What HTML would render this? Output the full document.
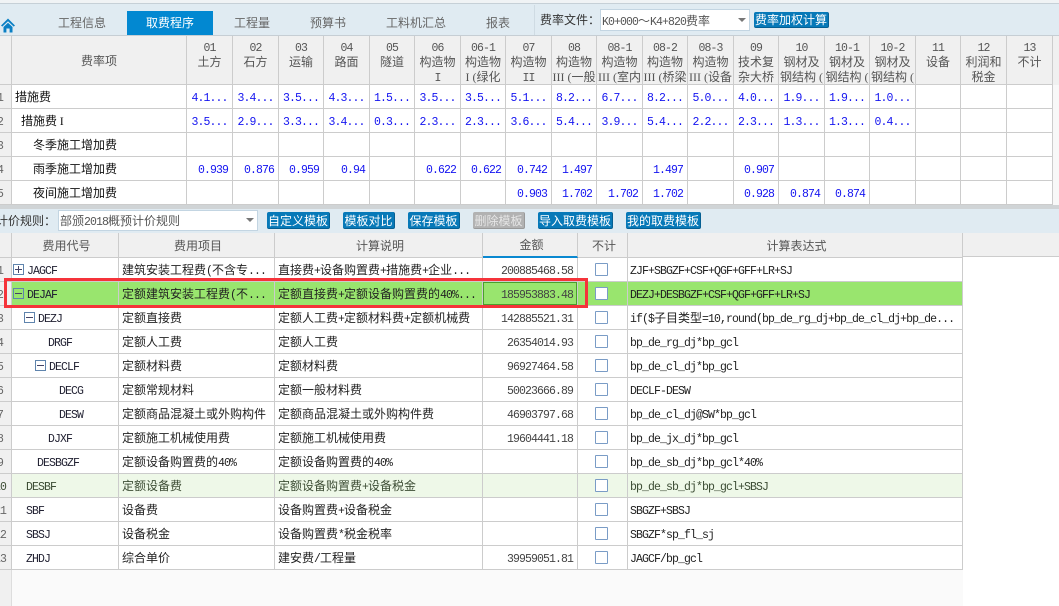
<!DOCTYPE html>
<html><head><meta charset="utf-8"><style>
html,body{margin:0;padding:0;background:#fff}
#p{position:relative;width:1059px;height:606px;overflow:hidden;background:#fafafa;font:12px/24px "WenQuanYi Zen Hei","Noto Sans CJK SC",sans-serif;color:#222}
.a{position:absolute;white-space:nowrap}
i{font:normal 11.5px/0 "Liberation Mono",monospace;letter-spacing:-.9px}
.s{font-family:"Liberation Serif",serif;line-height:0}
.tab{top:11px;height:24px;line-height:24px;color:#666}
.btn{background:#0779b8;color:#fff;text-align:center;border-radius:2px;top:212px;height:17px;line-height:17px;border-right:1px solid #055f92;border-bottom:1px solid #055f92;box-sizing:border-box}
.sel{background:#fff;border:1px solid #c3d5e2;box-sizing:border-box;color:#555}
.arr{width:0;height:0;border-left:4px solid transparent;border-right:4px solid transparent;border-top:4px solid #777}
table{position:absolute;border-collapse:separate;border-spacing:0;table-layout:fixed}
td{padding:0;border-right:1px solid #ccc;border-bottom:1px solid #ccc;box-sizing:border-box;overflow:hidden;white-space:nowrap;background:#fff;height:24px;line-height:23px}
td.n{background:#f0f0f0;direction:rtl;text-align:right;padding-right:9px;color:#666}
td.n2{padding-right:6px}
tr.h td{background:#f0f0f0;color:#555;text-align:center}
#t tr.h td{height:49px;line-height:15px;vertical-align:top;padding-top:3px}
#t td.v{color:#1414f0;text-align:center}
#t td.r{color:#1414f0;text-align:right;padding-right:4px}
#b tr.h td{height:24px}
#b td{padding-left:3px}
#b td.n{padding-left:0}
#b td.e{padding-left:2px}
#b td.amt{text-align:right;padding:0 4px 0 0;color:#444}
#b td.ck{padding:0;position:relative}
#b td.ck b{position:absolute;left:17px;top:5px;width:13px;height:13px;box-sizing:border-box;border:1px solid #7a9cc6;background:#fff;border-radius:1px}
#b td.c{color:#223}
.box{display:inline-block;width:11px;height:11px;box-sizing:border-box;border:1px solid #5f84ad;position:relative;vertical-align:-1px;margin-right:3px;line-height:0}
.box:before{content:"";position:absolute;left:1px;right:1px;top:4px;height:1px;background:#446}
.plus:after{content:"";position:absolute;top:1px;bottom:1px;left:4px;width:1px;background:#446}
tr.g td{background:#99e56e}
tr.lg td{background:#eef8e8;color:#3c4c34}
tr.g td.n,tr.lg td.n{background:#f0f0f0}
</style></head><body><div id="p">

<div class="a" style="left:0;top:0;width:1059px;height:3px;background:#f0f3f5"></div>
<div class="a" style="left:0;top:3px;width:1059px;height:1px;background:#c6d0d7"></div>
<div class="a" style="left:0;top:4px;width:1059px;height:31px;background:#e0ebf2"></div>
<div class="a" style="left:0;top:35px;width:1059px;height:1px;background:#c6ced4"></div>

<svg class="a" style="left:1px;top:18px" width="15" height="15" viewBox="0 0 15 15"><path d="M7 0.5L0 7.5L1.3 8.6L7 3.2L12.7 8.6L14 7.5Z" fill="#0a7fc4"/><path d="M2.5 9L7 4.8L11.5 9V14.5H8.6V10.5H5.4V14.5H2.5Z" fill="#0a7fc4"/></svg>

<div class="a tab" style="left:58px">工程信息</div>
<div class="a tab" style="left:127px;width:86px;background:#0288d1;color:#fff;text-align:center">取费程序</div>
<div class="a tab" style="left:234px">工程量</div>
<div class="a tab" style="left:310px">预算书</div>
<div class="a tab" style="left:386px">工料机汇总</div>
<div class="a tab" style="left:486px">报表</div>
<div class="a" style="left:534px;top:5px;width:1px;height:30px;background:#cfdbe3"></div>
<div class="a" style="left:540px;top:8px;color:#333">费率文件：</div>
<div class="a sel" style="left:600px;top:9px;width:150px;height:22px;line-height:21px;padding-left:1px"><i>K0+000</i>～<i>K4+820</i>费率</div>
<div class="a arr" style="left:738px;top:18px"></div>
<div class="a btn" style="left:754px;top:12px;width:75px;height:16px;line-height:15px">费率加权计算</div>

<table id="t" style="left:0;top:36px;width:1053px">
<colgroup><col style="width:12px"><col style="width:175px"><col style="width:46px"><col style="width:46px"><col style="width:45px"><col style="width:46px"><col style="width:45px"><col style="width:46px"><col style="width:45px"><col style="width:46px"><col style="width:45px"><col style="width:46px"><col style="width:45px"><col style="width:46px"><col style="width:45px"><col style="width:46px"><col style="width:45px"><col style="width:46px"><col style="width:45px"><col style="width:46px"><col style="width:46px"></colgroup>
<tr class="h"><td></td><td style="line-height:44px">费率项</td>
<td><i>01</i><br>土方</td><td><i>02</i><br>石方</td><td><i>03</i><br>运输</td><td><i>04</i><br>路面</td><td><i>05</i><br>隧道</td>
<td><i>06</i><br>构造物<br><i>I</i></td><td><i>06-1</i><br>构造物<br><span class="s">I (</span>绿化</td><td><i>07</i><br>构造物<br><i>II</i></td>
<td><i>08</i><br>构造物<br><span class="s">III (</span>一般</td><td><i>08-1</i><br>构造物<br><span class="s">III (</span>室内</td><td><i>08-2</i><br>构造物<br><span class="s">III (</span>桥梁</td><td><i>08-3</i><br>构造物<br><span class="s">III (</span>设备</td>
<td><i>09</i><br>技术复<br>杂大桥</td><td><i>10</i><br>钢材及<br>钢结构<span class="s"> (</span></td><td><i>10-1</i><br>钢材及<br>钢结构<span class="s"> (</span></td><td><i>10-2</i><br>钢材及<br>钢结构<span class="s"> (</span></td>
<td><i>11</i><br>设备</td><td><i>12</i><br>利润和<br>税金</td><td><i>13</i><br>不计</td></tr>
<tr><td class="n"><i>1</i></td><td style="padding-left:3px;color:#111">措施费</td><td class="v"><i>4.1...</i></td><td class="v"><i>3.4...</i></td><td class="v"><i>3.5...</i></td><td class="v"><i>4.3...</i></td><td class="v"><i>1.5...</i></td><td class="v"><i>3.5...</i></td><td class="v"><i>3.5...</i></td><td class="v"><i>5.1...</i></td><td class="v"><i>8.2...</i></td><td class="v"><i>6.7...</i></td><td class="v"><i>8.2...</i></td><td class="v"><i>5.0...</i></td><td class="v"><i>4.0...</i></td><td class="v"><i>1.9...</i></td><td class="v"><i>1.9...</i></td><td class="v"><i>1.0...</i></td><td></td><td></td><td></td></tr>
<tr><td class="n"><i>2</i></td><td style="padding-left:9px;color:#111">措施费 <span class="s">I</span></td><td class="v"><i>3.5...</i></td><td class="v"><i>2.9...</i></td><td class="v"><i>3.3...</i></td><td class="v"><i>3.4...</i></td><td class="v"><i>0.3...</i></td><td class="v"><i>2.3...</i></td><td class="v"><i>2.3...</i></td><td class="v"><i>3.6...</i></td><td class="v"><i>5.4...</i></td><td class="v"><i>3.9...</i></td><td class="v"><i>5.4...</i></td><td class="v"><i>2.2...</i></td><td class="v"><i>2.3...</i></td><td class="v"><i>1.3...</i></td><td class="v"><i>1.3...</i></td><td class="v"><i>0.4...</i></td><td></td><td></td><td></td></tr>
<tr><td class="n"><i>3</i></td><td style="padding-left:21px;color:#111">冬季施工增加费</td><td></td><td></td><td></td><td></td><td></td><td></td><td></td><td></td><td></td><td></td><td></td><td></td><td></td><td></td><td></td><td></td><td></td><td></td><td></td></tr>
<tr><td class="n"><i>4</i></td><td style="padding-left:21px;color:#111">雨季施工增加费</td><td class="r"><i>0.939</i></td><td class="r"><i>0.876</i></td><td class="r"><i>0.959</i></td><td class="r"><i>0.94</i></td><td></td><td class="r"><i>0.622</i></td><td class="r"><i>0.622</i></td><td class="r"><i>0.742</i></td><td class="r"><i>1.497</i></td><td></td><td class="r"><i>1.497</i></td><td></td><td class="r"><i>0.907</i></td><td></td><td></td><td></td><td></td><td></td><td></td></tr>
<tr><td class="n"><i>5</i></td><td style="padding-left:21px;color:#111">夜间施工增加费</td><td></td><td></td><td></td><td></td><td></td><td></td><td></td><td class="r"><i>0.903</i></td><td class="r"><i>1.702</i></td><td class="r"><i>1.702</i></td><td class="r"><i>1.702</i></td><td></td><td class="r"><i>0.928</i></td><td class="r"><i>0.874</i></td><td class="r"><i>0.874</i></td><td></td><td></td><td></td><td></td></tr>
</table>
<div class="a" style="left:1053px;top:36px;width:6px;height:49px;background:#f0f0f0"></div>
<div class="a" style="left:1053px;top:85px;width:6px;height:120px;background:#f8f8f8"></div>

<div class="a" style="left:0;top:205px;width:1059px;height:4px;background:#d0d4d6"></div>
<div class="a" style="left:0;top:209px;width:1059px;height:24px;background:#e0ebf2"></div>
<div class="a" style="left:-4px;top:209px;line-height:24px;color:#333">计价规则：</div>
<div class="a sel" style="left:58px;top:210px;width:200px;height:21px;line-height:20px;padding-left:1px">部颁<i>2018</i>概预计价规则</div>
<div class="a arr" style="left:246px;top:218px"></div>
<div class="a btn" style="left:267px;width:63px">自定义模板</div>
<div class="a btn" style="left:343px;width:52px">模板对比</div>
<div class="a btn" style="left:408px;width:52px">保存模板</div>
<div class="a btn" style="left:473px;width:52px;background:#b2b2b2;border-color:#999;color:#e6e6e6">删除模板</div>
<div class="a btn" style="left:538px;width:75px">导入取费模板</div>
<div class="a btn" style="left:626px;width:75px">我的取费模板</div>

<div class="a" style="left:0;top:233px;width:1059px;height:24px;background:#f0f0f0;border-bottom:1px solid #ccc;box-sizing:border-box"></div>
<div class="a" style="left:0;top:257px;width:12px;height:349px;background:#f0f0f0;border-right:1px solid #ddd;box-sizing:border-box"></div>
<div class="a" style="left:963px;top:257px;width:96px;height:349px;background:#fff"></div>

<table id="b" style="left:0;top:233px;width:963px">
<colgroup><col style="width:12px"><col style="width:107px"><col style="width:156px"><col style="width:208px"><col style="width:95px"><col style="width:50px"><col style="width:335px"></colgroup>
<tr class="h"><td></td><td>费用代号</td><td>费用项目</td><td>计算说明</td><td style="border-bottom:2px solid #0a88d0">金额</td><td>不计</td><td>计算表达式</td></tr>
<tr><td class="n"><i>1</i></td><td class="c" style="padding-left:1px"><span class="box plus"></span><i>JAGCF</i></td><td>建筑安装工程费<i>(</i>不含专<i>...</i></td><td>直接费<i>+</i>设备购置费<i>+</i>措施费<i>+</i>企业<i>...</i></td><td class="amt"><i>200885468.58</i></td><td class="ck"><b></b></td><td class="e"><i>ZJF+SBGZF+CSF+QGF+GFF+LR+SJ</i></td></tr>
<tr class="g"><td class="n"><i>2</i></td><td class="c" style="padding-left:1px"><span class="box"></span><i>DEJAF</i></td><td>定额建筑安装工程费<i>(</i>不<i>...</i></td><td>定额直接费<i>+</i>定额设备购置费的<i>40%...</i></td><td class="amt" style="box-shadow:inset 0 0 0 1px #4aa02c"><i>185953883.48</i></td><td class="ck"><b></b></td><td class="e"><i>DEZJ+DESBGZF+CSF+QGF+GFF+LR+SJ</i></td></tr>
<tr><td class="n"><i>3</i></td><td class="c" style="padding-left:12px"><span class="box"></span><i>DEZJ</i></td><td>定额直接费</td><td>定额人工费<i>+</i>定额材料费<i>+</i>定额机械费</td><td class="amt"><i>142885521.31</i></td><td class="ck"><b></b></td><td class="e"><i>if($</i>子目类型<i>=10,round(bp_de_rg_dj+bp_de_cl_dj+bp_de...</i></td></tr>
<tr><td class="n"><i>4</i></td><td class="c" style="padding-left:36px"><i>DRGF</i></td><td>定额人工费</td><td>定额人工费</td><td class="amt"><i>26354014.93</i></td><td class="ck"><b></b></td><td class="e"><i>bp_de_rg_dj*bp_gcl</i></td></tr>
<tr><td class="n"><i>5</i></td><td class="c" style="padding-left:23px"><span class="box"></span><i>DECLF</i></td><td>定额材料费</td><td>定额材料费</td><td class="amt"><i>96927464.58</i></td><td class="ck"><b></b></td><td class="e"><i>bp_de_cl_dj*bp_gcl</i></td></tr>
<tr><td class="n"><i>6</i></td><td class="c" style="padding-left:47px"><i>DECG</i></td><td>定额常规材料</td><td>定额一般材料费</td><td class="amt"><i>50023666.89</i></td><td class="ck"><b></b></td><td class="e"><i>DECLF-DESW</i></td></tr>
<tr><td class="n"><i>7</i></td><td class="c" style="padding-left:47px"><i>DESW</i></td><td>定额商品混凝土或外购构件</td><td>定额商品混凝土或外购构件费</td><td class="amt"><i>46903797.68</i></td><td class="ck"><b></b></td><td class="e"><i>bp_de_cl_dj@SW*bp_gcl</i></td></tr>
<tr><td class="n"><i>8</i></td><td class="c" style="padding-left:36px"><i>DJXF</i></td><td>定额施工机械使用费</td><td>定额施工机械使用费</td><td class="amt"><i>19604441.18</i></td><td class="ck"><b></b></td><td class="e"><i>bp_de_jx_dj*bp_gcl</i></td></tr>
<tr><td class="n"><i>9</i></td><td class="c" style="padding-left:25px"><i>DESBGZF</i></td><td>定额设备购置费的<i>40%</i></td><td>定额设备购置费的<i>40%</i></td><td class="amt"></td><td class="ck"><b></b></td><td class="e"><i>bp_de_sb_dj*bp_gcl*40%</i></td></tr>
<tr class="lg"><td class="n n2"><i>10</i></td><td style="padding-left:14px"><i>DESBF</i></td><td>定额设备费</td><td>定额设备购置费<i>+</i>设备税金</td><td class="amt"></td><td class="ck"><b></b></td><td class="e"><i>bp_de_sb_dj*bp_gcl+SBSJ</i></td></tr>
<tr><td class="n n2"><i>11</i></td><td class="c" style="padding-left:14px"><i>SBF</i></td><td>设备费</td><td>设备购置费<i>+</i>设备税金</td><td class="amt"></td><td class="ck"><b></b></td><td class="e"><i>SBGZF+SBSJ</i></td></tr>
<tr><td class="n n2"><i>12</i></td><td class="c" style="padding-left:14px"><i>SBSJ</i></td><td>设备税金</td><td>设备购置费<i>*</i>税金税率</td><td class="amt"></td><td class="ck"><b></b></td><td class="e"><i>SBGZF*sp_fl_sj</i></td></tr>
<tr><td class="n n2"><i>13</i></td><td class="c" style="padding-left:14px"><i>ZHDJ</i></td><td>综合单价</td><td>建安费<i>/</i>工程量</td><td class="amt"><i>39959051.81</i></td><td class="ck"><b></b></td><td class="e"><i>JAGCF/bp_gcl</i></td></tr>
</table>

<div class="a" style="left:4px;top:278px;width:584px;height:30px;border:3px solid #f5333a;box-sizing:border-box"></div>
</div></body></html>
